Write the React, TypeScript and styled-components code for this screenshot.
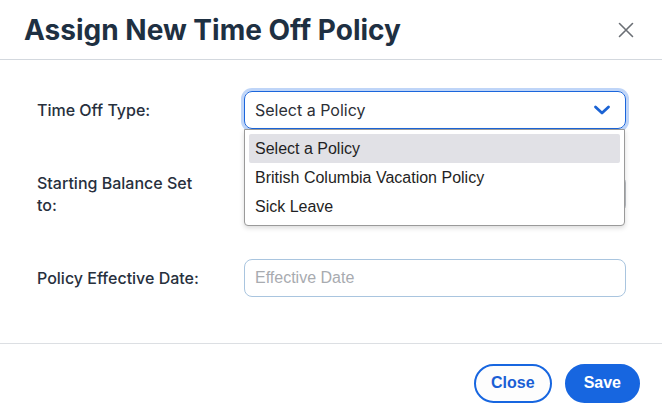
import React from 'react';
import styled, { createGlobalStyle } from 'styled-components';

const GlobalStyle = createGlobalStyle`
  html, body {
    margin: 0;
    padding: 0;
    background: #ffffff;
  }
  body {
    font-family: Inter, "Liberation Sans", sans-serif;
  }
`;

const Modal = styled.div`
  width: 662px;
  height: 420px;
  background: #fff;
  display: flex;
  flex-direction: column;
`;

const Header = styled.div`
  height: 59px;
  border-bottom: 1px solid #d3d8de;
  display: flex;
  align-items: center;
  justify-content: space-between;
  padding: 0 26px 0 24px;
  box-sizing: content-box;
`;

const Title = styled.h1`
  margin: 0;
  font-family: Inter, sans-serif;
  font-weight: 700;
  font-size: 28px;
  color: #1e3042;
`;

const CloseIcon = styled.button`
  border: 0;
  background: none;
  padding: 0;
  width: 20px;
  height: 20px;
  display: flex;
  align-items: center;
  justify-content: center;
  cursor: pointer;
`;

const Body = styled.div`
  flex: 1;
  padding: 28px 36px 0 37px;
  display: flex;
  flex-direction: column;
  gap: 40px;
`;

const Row = styled.div<{ $top?: boolean }>`
  display: grid;
  grid-template-columns: 207px 1fr;
  align-items: center;
  min-height: 44px;
  position: relative;
  z-index: ${(p) => (p.$top ? 2 : 1)};
`;

const Label = styled.label`
  font-family: Inter, sans-serif;
  font-size: 16px;
  font-weight: 500;
  color: #27303d;
  line-height: 22px;
  max-width: 170px;
`;

const Field = styled.div`
  position: relative;
`;

const SelectBox = styled.div`
  height: 38px;
  box-sizing: border-box;
  border: 1px solid #1b66dc;
  border-radius: 8px;
  box-shadow: 0 0 0 3px #bfd5f8;
  display: flex;
  align-items: center;
  justify-content: space-between;
  padding: 0 14px 0 10px;
  font-family: Inter, sans-serif;
  font-size: 16px;
  color: #2c2f36;
`;

const Input = styled.div<{ $muted?: boolean }>`
  height: 38px;
  box-sizing: border-box;
  border: 1px solid ${(p) => (p.$muted ? '#b8bcc2' : '#a9c5df')};
  border-radius: 8px;
  display: flex;
  align-items: center;
  padding: 0 10px;
  font-family: "Liberation Sans", Arial, sans-serif;
  font-size: 16px;
  color: #a8abb0;
`;

const Menu = styled.ul`
  position: absolute;
  top: 38px;
  left: 0;
  right: 1px;
  margin: 0;
  padding: 4px;
  list-style: none;
  background: #fff;
  border: 1px solid #9a9a9a;
  border-radius: 0 0 4px 4px;
  box-shadow: 0 2px 5px rgba(0, 0, 0, 0.15);
`;

const Option = styled.li<{ $active?: boolean }>`
  height: 29px;
  display: flex;
  align-items: center;
  padding: 0 6px;
  border-radius: 2px;
  font-family: "Liberation Sans", Arial, sans-serif;
  font-size: 16px;
  color: #1f1f24;
  background: ${(p) => (p.$active ? '#e1e1e6' : 'transparent')};
`;

const Footer = styled.div`
  height: 77px;
  box-sizing: border-box;
  padding: 2px 22px 0 0;
  border-top: 1px solid #dcdfe3;
  display: flex;
  align-items: center;
  justify-content: flex-end;
  gap: 13px;
`;

const Button = styled.button<{ $primary?: boolean }>`
  height: 39px;
  padding: 0 ${(p) => (p.$primary ? '17px' : '15px')};
  border-radius: 20px;
  border: 2px solid #1766e0;
  background: ${(p) => (p.$primary ? '#1766e0' : '#fdfdfd')};
  color: ${(p) => (p.$primary ? '#fff' : '#1a5fd5')};
  font-family: "Liberation Sans", Arial, sans-serif;
  font-weight: 700;
  font-size: 16px;
  cursor: pointer;
`;

export default function App() {
  return (
    <>
      <GlobalStyle />
      <Modal>
        <Header>
          <Title>Assign New Time Off Policy</Title>
          <CloseIcon aria-label="Close">
            <svg width="16" height="16" viewBox="0 0 16 16">
              <path d="M1.5 1.5 L14.5 14.5 M14.5 1.5 L1.5 14.5" stroke="#6b6f75" strokeWidth="1.6" strokeLinecap="round" />
            </svg>
          </CloseIcon>
        </Header>
        <Body>
          <Row $top>
            <Label>Time Off Type:</Label>
            <Field>
              <SelectBox>
                Select a Policy
                <svg width="18" height="12" viewBox="0 0 18 12">
                  <path d="M2.5 3 L9 9 L15.5 3" fill="none" stroke="#1b63d4" strokeWidth="2.8" strokeLinecap="round" strokeLinejoin="round" />
                </svg>
              </SelectBox>
              <Menu>
                <Option $active>Select a Policy</Option>
                <Option>British Columbia Vacation Policy</Option>
                <Option>Sick Leave</Option>
              </Menu>
            </Field>
          </Row>
          <Row>
            <Label>Starting Balance Set to:</Label>
            <Input $muted />
          </Row>
          <Row>
            <Label>Policy Effective Date:</Label>
            <Input>Effective Date</Input>
          </Row>
        </Body>
        <Footer>
          <Button>Close</Button>
          <Button $primary>Save</Button>
        </Footer>
      </Modal>
    </>
  );
}
